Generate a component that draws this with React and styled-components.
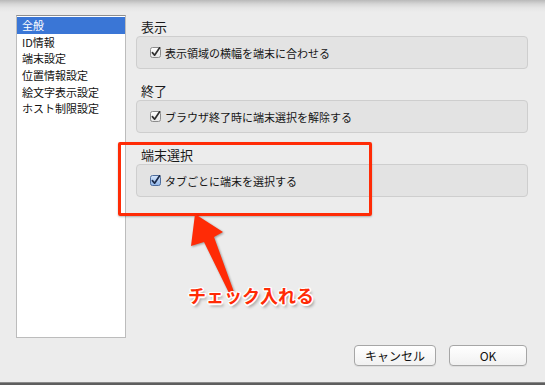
import React from "react";
import styled, { createGlobalStyle } from "styled-components";

const GlobalStyle = createGlobalStyle`
    html, body {
        margin: 0;
        padding: 0;
        background: #ececec;
    }
    body {
        font-family: "Noto Sans CJK JP", "Noto Sans", sans-serif;
        color: #1c1c1c;
    }
`;

const Window = styled.div`
    position: relative;
    width: 545px;
    height: 385px;
    overflow: hidden;
    box-sizing: border-box;
    background: linear-gradient(#b9b9b9 0px, #d6d6d6 4px, #e6e6e6 8px, #ececec 12px);
    display: flex;
    flex-direction: column;
    padding-top: 15px;
`;

const Main = styled.div`
    display: flex;
    height: 323px;
    padding-left: 16px;
`;

const Sidebar = styled.ul`
    list-style: none;
    margin: 0;
    padding: 1px 0 0;
    width: 110px;
    box-sizing: border-box;
    background: #fff;
    border: 1px solid #bcbcbc;
    border-top-color: #8e8e8e;
`;

const SideItem = styled.li`
    height: 16.7px;
    line-height: 16.7px;
    padding-left: 5px;
    font-size: 11px;
    white-space: nowrap;
    background: ${(p) => (p.$active ? "#3a76d6" : "transparent")};
    color: ${(p) => (p.$active ? "#fff" : "#111")};
`;

const Content = styled.div`
    display: flex;
    flex-direction: column;
    gap: 13px;
    margin-left: 10px;
    padding-top: 3px;
    width: 392px;
`;

const Section = styled.section`
    display: flex;
    flex-direction: column;
`;

const Label = styled.div`
    height: 18px;
    line-height: 18px;
    padding-left: 5px;
    font-size: 13px;
    color: #1a1a1a;
`;

const Box = styled.div`
    height: 33px;
    box-sizing: border-box;
    background: #e3e3e3;
    border: 1px solid #cecece;
    border-radius: 4px;
    display: flex;
    align-items: center;
    padding-left: 13px;
    gap: 4px;
    font-size: 11px;
    color: #151515;
`;

const Footer = styled.div`
    display: flex;
    justify-content: flex-end;
    gap: 13px;
    padding-right: 18px;
    margin-top: 7px;
`;

const Button = styled.button`
    width: ${(p) => p.$w}px;
    height: 21px;
    box-sizing: border-box;
    border: 1px solid #a6a6a6;
    border-radius: 4px;
    background: linear-gradient(#ffffff, #f1f1f1);
    box-shadow: 0 1px 0 rgba(0, 0, 0, 0.06);
    font-family: "Noto Sans CJK JP", sans-serif;
    font-size: 12px;
    color: #111;
    padding: 0;
`;

const BottomEdge = styled.div`
    position: absolute;
    left: 0;
    right: 0;
    bottom: 0;
    height: 2px;
    background: #5e5e5e;
    border-top: 1px solid #8a8a8a;
`;

const Highlight = styled.div`
    position: absolute;
    left: 118px;
    top: 142px;
    width: 254px;
    height: 74px;
    box-sizing: border-box;
    border: 3px solid #ff2b06;
    border-radius: 2px;
    box-shadow: 0 1px 2px rgba(0, 0, 0, 0.25);
`;

const Arrow = styled.svg`
    position: absolute;
    left: 0;
    top: 0;
    filter: drop-shadow(1px 1px 1px rgba(0, 0, 0, 0.35));
`;

const Note = styled.div`
    position: absolute;
    left: 188px;
    top: 282px;
    font-size: 18px;
    font-weight: 700;
    color: #ff2b06;
    text-shadow:
        -1.5px 0 0 #fff, 1.5px 0 0 #fff, 0 -1.5px 0 #fff, 0 1.5px 0 #fff,
        -1px -1px 0 #fff, 1px -1px 0 #fff, -1px 1px 0 #fff, 1px 1px 0 #fff,
        2px 3px 3px rgba(0, 0, 0, 0.35);
`;

const Check = ({ blue }) => (
    <svg width="11" height="11" viewBox="0 0 11 11">
        <defs>
            <linearGradient id={blue ? "cbB" : "cbG"} x1="0" y1="0" x2="0" y2="1">
                <stop offset="0" stopColor={blue ? "#d6e6fb" : "#ffffff"} />
                <stop offset="1" stopColor={blue ? "#8fb5ea" : "#e6e6e6"} />
            </linearGradient>
        </defs>
        <rect x="0.5" y="0.5" width="10" height="10" rx="2" fill={`url(#${blue ? "cbB" : "cbG"})`} stroke={blue ? "#4d6c9c" : "#8c8c8c"} />
        <path d="M2.4 5.6 L4.6 8.2 L9.6 0.8" fill="none" stroke={blue ? "#1b2b4a" : "#303030"} strokeWidth="1.7" strokeLinecap="round" strokeLinejoin="round" />
    </svg>
);

const items = ["全般", "ID情報", "端末設定", "位置情報設定", "絵文字表示設定", "ホスト制限設定"];

const sections = [
    { title: "表示", text: "表示領域の横幅を端末に合わせる" },
    { title: "終了", text: "ブラウザ終了時に端末選択を解除する" },
    { title: "端末選択", text: "タブごとに端末を選択する", blue: true },
];

const App = () => {
    return (
        <>
            <GlobalStyle />
            <Window>
                <Main>
                    <Sidebar>
                        {items.map((it, i) => (
                            <SideItem key={it} $active={i === 0}>{it}</SideItem>
                        ))}
                    </Sidebar>
                    <Content>
                        {sections.map((s) => (
                            <Section key={s.title}>
                                <Label>{s.title}</Label>
                                <Box>
                                    <Check blue={s.blue} />
                                    <span>{s.text}</span>
                                </Box>
                            </Section>
                        ))}
                    </Content>
                </Main>
                <Footer>
                    <Button $w={82}>キャンセル</Button>
                    <Button $w={78}>OK</Button>
                </Footer>
                <BottomEdge />
                <Highlight />
                <Arrow width="545" height="385">
                    <path
                        d="M195 214 L223 232 L214 237 L234 292 L229 293 L204 242 L191 246 Z"
                        fill="#ff2b06"
                    />
                </Arrow>
                <Note>チェック入れる</Note>
            </Window>
        </>
    );
};

export default App;
